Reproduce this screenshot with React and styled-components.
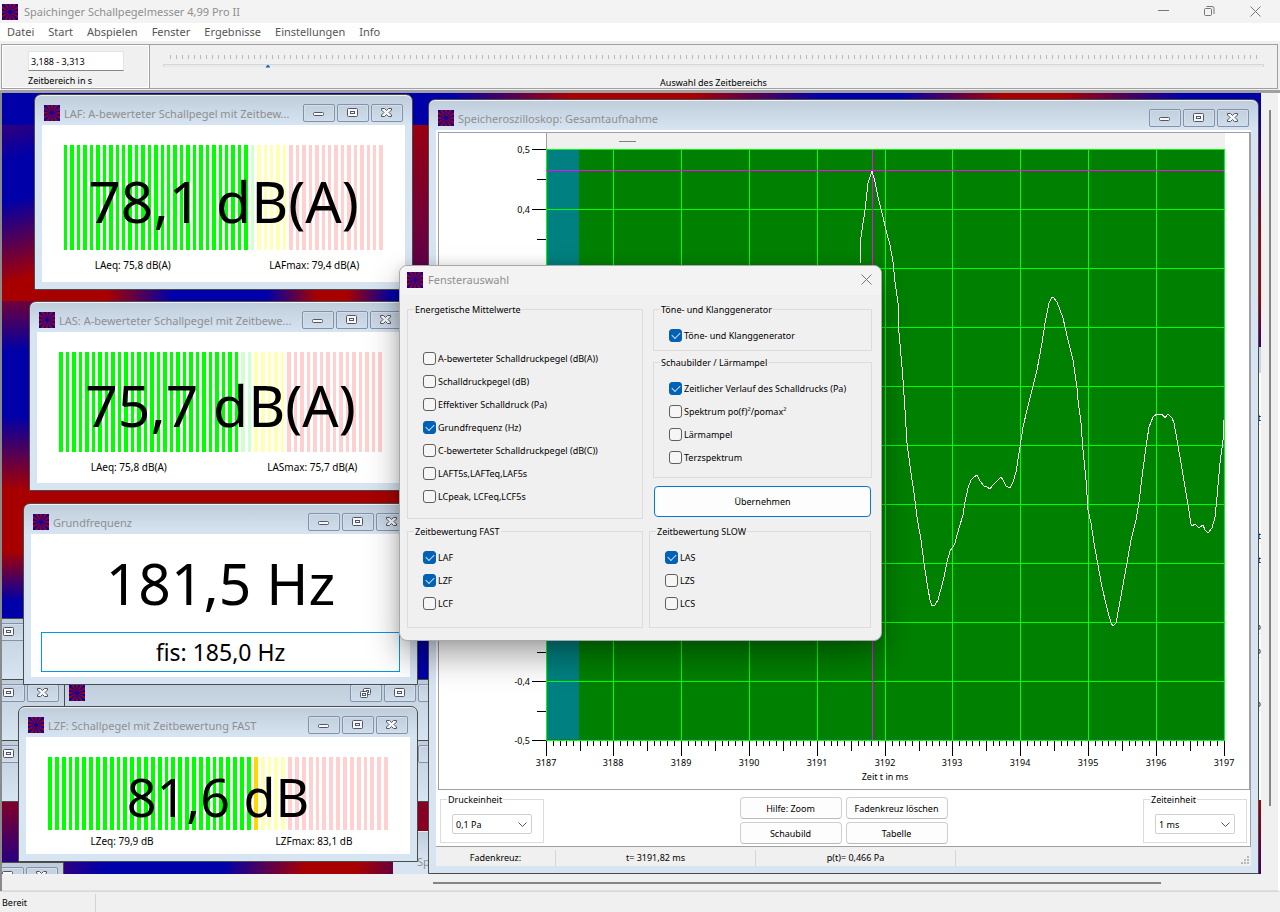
import React from 'react';
import styled, { createGlobalStyle, css } from 'styled-components';

const GlobalStyle = createGlobalStyle`
  * {
    box-sizing: border-box;
  }
  body {
    margin: 0;
    background: #f0f0f0;
    color: #000;
    font-family: 'Noto Sans', 'Open Sans', sans-serif;
    font-size: 9px;
    line-height: 13px;
  }
  button, input, select {
    font: inherit;
    color: inherit;
  }
`;

const menu = ['Datei', 'Start', 'Abspielen', 'Fenster', 'Ergebnisse', 'Einstellungen', 'Info'];

const wave = `860,264 861,237 865,210 868,183 872,171 875,182 878,197 882,213 886,230 890,245 893,262
  895,282 898,303 899,333 902,367 903,380 905,410 907,443 911,473 914,493 917,517 921,540 924,563
  927,583 930,600 932,606 935,605 938,600 942,585 944,577 947,562 950,551 953,547 955,543 959,528
  963,515 965,502 968,488 971,480 974,477 977,475 980,481 984,486 987,487 990,489 993,485 997,481
  1001,477 1003,480 1006,486 1010,488 1013,482 1016,472 1020,447 1023,427 1027,410 1031,394
  1037,370 1042,343 1045,323 1049,303 1052,297 1054,298 1057,302 1063,318 1068,340 1073,360
  1077,388 1078,400 1081,423 1083,450 1086,480 1088,510 1091,523 1094,543 1098,565 1102,587
  1107,608 1111,623 1113,626 1116,623 1119,607 1123,585 1127,563 1131,540 1136,520 1139,502
  1142,477 1146,447 1149,427 1153,417 1157,414 1162,414 1165,418 1168,414 1172,418 1174,423
  1177,440 1181,463 1185,487 1188,505 1191,524 1192,526 1195,524 1199,528 1203,525 1205,530
  1208,533 1212,528 1215,517 1217,497 1220,463 1223,440 1224,420`;

const gridX = [546, 613, 681, 749, 817, 885, 952, 1020, 1088, 1156, 1224];
const gridY = [149, 209, 268, 327, 386, 445, 504, 563, 622, 681, 740];
const yLabels = { 149: '0,5', 209: '0,4', 681: '-0,4', 740: '-0,5' };

const rays = Array.from({ length: 12 }, (_, i) => {
  const point = (deg) => {
    const a = (deg * Math.PI) / 180;
    return `${(8 + 14 * Math.cos(a)).toFixed(2)},${(8 + 14 * Math.sin(a)).toFixed(2)}`;
  };
  return `8,8 ${point(i * 30 + 8)} ${point(i * 30 + 23)}`;
});

const AppIcon = () => (
  <Icon viewBox="0 0 16 16" aria-hidden="true">
    <rect width="16" height="16" fill="#a3000f" />
    {rays.map((points) => (
      <polygon key={points} points={points} fill="#0a00a8" />
    ))}
    <circle cx="8" cy="8" r="2" fill="#0a00a8" />
  </Icon>
);

const glyphs = {
  min: <rect x="1.5" y="4.5" width="10" height="3" rx="1" />,
  max: (
    <>
      <rect x="1.5" y="0.5" width="10" height="8" rx="1" />
      <rect x="4.5" y="3.5" width="4" height="2" />
    </>
  ),
  restore: (
    <>
      <rect x="4.5" y="0.5" width="7" height="6" rx="1" />
      <rect x="7.5" y="2.5" width="2" height="2" />
      <rect x="1.5" y="3.5" width="7" height="6" rx="1" />
      <rect x="3.5" y="5.5" width="3" height="2" />
    </>
  ),
  close: <path d="M1.500 0.500h3l2 2 2-2h3v1.500l-2.500 2.500 2.500 2.500v1.500h-3l-2-2-2 2h-3v-1.500l2.500-2.500-2.500-2.500z" />
};

const labels = {
  min: 'Minimieren',
  max: 'Maximieren',
  restore: 'Wiederherstellen',
  close: 'Schließen'
};

const Controls = ({ kinds = ['min', 'max', 'close'] }) => (
  <ControlGroup>
    {kinds.map((kind) => (
      <ControlButton key={kind} type="button" aria-label={labels[kind]}>
        <svg width="14" height="10" viewBox="0 0 14 10" fill="#f8f8f8" stroke="#50566a">
          {glyphs[kind]}
        </svg>
      </ControlButton>
    ))}
  </ControlGroup>
);

const ChildWindow = ({ title, x, y, width, children }) => (
  <Frame $x={x} $y={y} $width={width}>
    <FrameTitle>
      <AppIcon />
      <TitleText>{title}</TitleText>
      <Controls />
    </FrameTitle>
    <FrameBody>{children}</FrameBody>
  </Frame>
);

const barColor = (index, level) => {
  const lit = index < level;
  if (index < 30) return lit ? '#00ff00' : '#d0ffd0';
  if (index < 35) return lit ? '#ffd800' : '#ffffb4';
  return lit ? '#ff0000' : '#ffd0d0';
};

const Meter = ({ value, level, height, footer, left, right, compact }) => (
  <>
    <MeterArea $height={height}>
      <Bars>
        {Array.from({ length: 50 }, (_, i) => (
          <Bar key={i} $color={barColor(i, level)} />
        ))}
      </Bars>
      <Reading $compact={compact}>{value}</Reading>
    </MeterArea>
    <Stats $height={footer}>
      <span>{left}</span>
      <span>{right}</span>
    </Stats>
  </>
);

const Chart = () => (
  <Plot viewBox="439 133 810 656" shapeRendering="crispEdges">
    <rect x="546" y="133" width="679" height="16" fill="#f0f0f0" />
    <path d="M546.500 133v16" stroke="#a0a0a0" />
    <path d="M619 141.500h17" stroke="#808080" />
    <rect x="546" y="149" width="679" height="592" fill="#008000" />
    <rect x="547" y="150" width="32" height="590" fill="#008080" />
    <path d="M1223.500 150v590M547 739.500h677" stroke="#008040" />
    {gridX.map((x) => (
      <path key={x} d={`M${x + 0.5} 149v592`} stroke="#00ff00" />
    ))}
    {gridY.map((y) => (
      <path key={y} d={`M546 ${y + 0.5}h679`} stroke="#00ff00" />
    ))}
    <path d="M546 170.500h678M872.500 150v590" stroke="#ff00ff" />
    <polyline points={wave} fill="none" stroke="#fff" />
    {gridY.map((y, i) => (
      <g key={y}>
        <path d={`M532 ${y + 0.5}h14`} stroke="#000" />
        {i < 10 && <path d={`M537 ${y + 30.5}h9`} stroke="#000" />}
        {yLabels[y] && (
          <AxisText x="530" y={y + 4} textAnchor="end">
            {yLabels[y]}
          </AxisText>
        )}
      </g>
    ))}
    {gridX.map((x, i) => (
      <g key={x}>
        <path d={`M${x + 0.5} 741v15`} stroke="#000" />
        {i < 10 &&
          [1, 2, 3, 4, 5, 6, 7, 8, 9].map((n) => (
            <path
              key={n}
              d={`M${Math.round(x + n * 6.78) + 0.5} 741v${n === 5 ? 10 : 5}`}
              stroke="#000"
            />
          ))}
        <AxisText x={x} y="766" textAnchor="middle">
          {3187 + i}
        </AxisText>
      </g>
    ))}
    <AxisText x="885" y="780" textAnchor="middle">
      Zeit t in ms
    </AxisText>
  </Plot>
);

const Check = ({ label, checked }) => (
  <CheckRow>
    <CheckInput type="checkbox" defaultChecked={checked} />
    {label}
  </CheckRow>
);

const Group = ({ title, items, width, top = 8, bottom = 8 }) => (
  <GroupBox $width={width} $top={top} $bottom={bottom}>
    <legend>{title}</legend>
    {items.map(([label, checked]) => (
      <Check key={label} label={label} checked={checked} />
    ))}
  </GroupBox>
);

const Unit = ({ title, value }) => (
  <UnitBox>
    <legend>{title}</legend>
    <SelectWrap>
      <Select aria-label={title} defaultValue={value}>
        <option>{value}</option>
      </Select>
      <svg width="9" height="5" viewBox="0 0 9 5" fill="none" stroke="#555">
        <path d="M0.500 0.500l4 4 4-4" />
      </svg>
    </SelectWrap>
  </UnitBox>
);

const SelectionDialog = () => (
  <Dialog role="dialog" aria-label="Fensterauswahl">
    <DialogTitle>
      <AppIcon />
      <TitleText>Fensterauswahl</TitleText>
      <DialogClose type="button" aria-label="Schließen">
        <svg width="11" height="11" viewBox="0 0 11 11" stroke="#777" fill="none">
          <path d="M0.500 0.500l10 10M10.500 0.500l-10 10" />
        </svg>
      </DialogClose>
    </DialogTitle>
    <DialogBody>
      <DialogRow $gap={10}>
        <Group
          title="Energetische Mittelwerte"
          width={236}
          top={31}
          bottom={10}
          items={[
            ['A-bewerteter Schalldruckpegel (dB(A))'],
            ['Schalldruckpegel (dB)'],
            ['Effektiver Schalldruck (Pa)'],
            ['Grundfrequenz (Hz)', true],
            ['C-bewerteter Schalldruckpegel (dB(C))'],
            ['LAFT5s,LAFTeq,LAF5s'],
            ['LCpeak, LCFeq,LCF5s']
          ]}
        />
        <DialogColumn>
          <Group
            title="Töne- und Klanggenerator"
            width={219}
            bottom={3}
            items={[['Töne- und Klanggenerator', true]]}
          />
          <Group
            title="Schaubilder / Lärmampel"
            width={219}
            items={[
              ['Zeitlicher Verlauf des Schalldrucks (Pa)', true],
              ['Spektrum po(f)²/pomax²'],
              ['Lärmampel'],
              ['Terzspektrum']
            ]}
          />
          <ApplyButton type="button">Übernehmen</ApplyButton>
        </DialogColumn>
      </DialogRow>
      <DialogRow $gap={6}>
        <Group
          title="Zeitbewertung FAST"
          width={236}
          bottom={12}
          items={[['LAF', true], ['LZF', true], ['LCF']]}
        />
        <Group
          title="Zeitbewertung SLOW"
          width={222}
          bottom={12}
          items={[['LAS', true], ['LZS'], ['LCS']]}
        />
      </DialogRow>
    </DialogBody>
  </Dialog>
);

const App = () => (
  <Page>
    <GlobalStyle />
    <TitleBar>
      <AppIcon />
      <TitleText>Spaichinger Schallpegelmesser 4,99 Pro II</TitleText>
      <SystemButton type="button" aria-label="Minimieren">
        <svg width="11" height="11" viewBox="0 0 11 11" stroke="#777" fill="none">
          <path d="M0 4.500h11" />
        </svg>
      </SystemButton>
      <SystemButton type="button" aria-label="Verkleinern">
        <svg width="11" height="11" viewBox="0 0 11 11" stroke="#777" fill="none">
          <rect x="0.500" y="2.500" width="7" height="7" rx="1" />
          <path d="M2.500 0.500h5.500a2 2 0 0 1 2 2v5.500" />
        </svg>
      </SystemButton>
      <SystemButton type="button" aria-label="Schließen">
        <svg width="11" height="11" viewBox="0 0 11 11" stroke="#777" fill="none">
          <path d="M0.500 0.500l10 10M10.500 0.500l-10 10" />
        </svg>
      </SystemButton>
    </TitleBar>
    <MenuBar>
      {menu.map((item) => (
        <MenuItem key={item} type="button">
          {item}
        </MenuItem>
      ))}
    </MenuBar>
    <Toolbar>
      <RangePanel>
        <RangeInput id="range" defaultValue="3,188 - 3,313" />
        <label htmlFor="range">Zeitbereich in s</label>
      </RangePanel>
      <SliderPanel>
        <Ticks />
        <Slider id="slider" type="range" min="0" max="1100" defaultValue="102" />
        <SliderLabel htmlFor="slider">Auswahl des Zeitbereichs</SliderLabel>
      </SliderPanel>
    </Toolbar>
    <Workspace>
      <Desktop>
        <MiniWindow $x={-98} $y={525} $width={161}>
          <Controls />
        </MiniWindow>
        <MiniWindow $x={-98} $y={586} $width={161}>
          <Controls />
        </MiniWindow>
        <MiniWindow $x={62} $y={586} $width={392}>
          <AppIcon />
          <Controls kinds={['restore', 'max', 'close']} />
        </MiniWindow>
        <MiniWindow $x={-98} $y={647} $width={161}>
          <Controls />
        </MiniWindow>
        <MiniWindow $x={62} $y={647} $width={392}>
          <Controls />
        </MiniWindow>
        <MiniWindow $x={-98} $y={769} $width={160}>
          <Controls />
        </MiniWindow>
        <BackWindow $x={391} $y={738} $width={300}>
          <TitleText>Sp</TitleText>
        </BackWindow>
        <SideWindow>
          <SideRow $height={36}>t</SideRow>
          <SideRow $height={118}>t</SideRow>
          <SideRow $height={24}>t</SideRow>
          <SideRow $height={67}>o</SideRow>
          <SideRow $height={24}>o</SideRow>
          <SideRow $height={53}>o</SideRow>
        </SideWindow>
        <ChildWindow
          title="LAF: A-bewerteter Schallpegel mit Zeitbew..."
          x={32}
          y={1}
          width={379}
        >
          <Meter
            value="78,1 dB(A)"
            level={29}
            height={105}
            footer={32}
            left="LAeq: 75,8 dB(A)"
            right="LAFmax: 79,4 dB(A)"
          />
        </ChildWindow>
        <ChildWindow
          title="LAS: A-bewerteter Schallpegel mit Zeitbewe..."
          x={27}
          y={208}
          width={383}
        >
          <Meter
            value="75,7 dB(A)"
            level={28}
            height={100}
            footer={31}
            left="LAeq: 75,8 dB(A)"
            right="LASmax: 75,7 dB(A)"
          />
        </ChildWindow>
        <ChildWindow title="Grundfrequenz" x={21} y={410} width={395}>
          <Frequency>
            <Reading>181,5 Hz</Reading>
            <Tone>fis: 185,0 Hz</Tone>
          </Frequency>
        </ChildWindow>
        <ChildWindow title="LZF: Schallpegel mit Zeitbewertung FAST" x={16} y={613} width={400}>
          <Meter
            value="81,6 dB"
            level={31}
            height={73}
            footer={24}
            left="LZeq: 79,9 dB"
            right="LZFmax: 83,1 dB"
            compact
          />
        </ChildWindow>
        <ChildWindow title="Speicheroszilloskop: Gesamtaufnahme" x={426} y={6} width={831}>
          <ChartPanel>
            <Chart />
          </ChartPanel>
          <ChartTools>
            <Unit title="Druckeinheit" value="0,1 Pa" />
            <ButtonGrid>
              <ToolButton type="button">Hilfe: Zoom</ToolButton>
              <ToolButton type="button">Fadenkreuz löschen</ToolButton>
              <ToolButton type="button">Schaubild</ToolButton>
              <ToolButton type="button">Tabelle</ToolButton>
            </ButtonGrid>
            <Unit title="Zeiteinheit" value="1 ms" />
          </ChartTools>
          <ChartStatus>
            <StatusCell $width={120}>Fadenkreuz:</StatusCell>
            <StatusCell $width={200}>t= 3191,82 ms</StatusCell>
            <StatusCell $width={200}>p(t)= 0,466 Pa</StatusCell>
            <Grip width="8" height="8" viewBox="0 0 8 8" fill="#b8b8b8">
              <path d="M6 0h2v2h-2zM3 3h2v2h-2zM6 3h2v2h-2zM0 6h2v2h-2zM3 6h2v2h-2zM6 6h2v2h-2z" />
            </Grip>
          </ChartStatus>
        </ChildWindow>
        <SelectionDialog />
      </Desktop>
      <VerticalScroll />
      <HorizontalScroll />
    </Workspace>
    <StatusBar>
      <Ready>Bereit</Ready>
    </StatusBar>
  </Page>
);

const Page = styled.div`
  display: flex;
  flex-direction: column;
  min-height: 100vh;
`;

const Icon = styled.svg`
  width: 16px;
  height: 16px;
  flex: none;
`;

const TitleText = styled.span`
  flex: 1;
  min-width: 0;
  white-space: nowrap;
  font-size: 11px;
  line-height: 18px;
  color: #8f8f8f;
`;

const TitleBar = styled.header`
  display: flex;
  align-items: center;
  gap: 6px;
  height: 23px;
  padding: 0 5px 0 2px;
  background: #f3f3f3;
`;

const bareButton = css`
  display: flex;
  align-items: center;
  justify-content: center;
  padding: 0;
  border: 0;
  background: none;
`;

const SystemButton = styled.button`
  ${bareButton}
  width: 40px;
  height: 22px;
`;

const MenuBar = styled.nav`
  display: flex;
  gap: 14px;
  height: 18px;
  padding: 0 7px;
  background: #fff;
`;

const MenuItem = styled.button`
  ${bareButton}
  font-size: 11px;
  line-height: 20px;
  color: #555;
`;

const Toolbar = styled.div`
  display: flex;
  height: 52px;
  padding: 3px 2px 1px 1px;
  border-bottom: 3px solid #a0a0a0;
`;

const RangePanel = styled.div`
  display: flex;
  flex-direction: column;
  gap: 3px;
  width: 149px;
  padding: 6px 26px 0;
  border: 1px solid #a0a0a0;
  box-shadow: inset 0 0 0 1px #fff;
`;

const RangeInput = styled.input`
  width: 96px;
  height: 20px;
  padding: 0 2px;
  border: 1px solid #e4e4e4;
  border-bottom-color: #868686;
  background: #fff;
`;

const SliderPanel = styled.div`
  display: flex;
  flex: 1;
  flex-direction: column;
  padding: 10px 13px 0;
  border: 1px solid #a0a0a0;
  border-left: 0;

  > * {
    flex: none;
  }
`;

const Ticks = styled.div`
  height: 4px;
  margin: 0 7px;
  background: repeating-linear-gradient(90deg, #b8b8b8 0 1px, transparent 1px 6px);
`;

const Slider = styled.input`
  appearance: none;
  width: 100%;
  height: 3px;
  margin: 5px 0 9px;
  border: 1px solid #d6d6d6;
  border-bottom: 0;
  background: #e7eaea;

  &::-webkit-slider-thumb {
    appearance: none;
    width: 5px;
    height: 3px;
    background: #0067c0;
    clip-path: polygon(50% 0, 100% 100%, 0 100%);
  }
`;

const SliderLabel = styled.label`
  text-align: center;
`;

const Workspace = styled.main`
  display: grid;
  flex: 1;
  grid-template-columns: minmax(0, 1fr) 17px;
  grid-template-rows: minmax(781px, 1fr) 17px;
  border-right: 2px solid #fff;
  border-left: 2px solid #8a8a8a;
`;

const Desktop = styled.div`
  position: relative;
  overflow: hidden;
  background:
    linear-gradient(180deg, #0000a8 20px, #a80000 150px, #a80000 200px, #3a0070 253px, #3a0070 706px, #a80000 707px, #3a0068) 100% 0 / 4px 100%,
    linear-gradient(90deg, #0000a8 450px, #a80000 570px, #a80000 690px, #0000a8 820px, #0000a8 900px, #a80000 1000px, #a80000 1060px, #0000a8 1180px) 0 0 / 100% 32px,
    linear-gradient(180deg, #980010, #500058) 411px 32px / 15px 180px,
    linear-gradient(165deg, #30007c, #0000a8 36px, #0000a8 75px, #a80000 155px) 0 32px / 32px 165px,
    linear-gradient(90deg, #a80000 105px, #0000a8 170px, #0000a8 265px, #a80000 315px, #a80000 345px, #0000a8 390px) 0 197px / 100% 11px,
    linear-gradient(100deg, #300080 60px, #0000a8 100px, #0000a8 220px, #a80000 300px, #a80000 350px, #500050 400px) 0 768px / 400px 13px,
    linear-gradient(180deg, #700038, #0000a8 50px, #0000a8 115px, #a80000 190px, #a80000 250px, #0000a8 300px, #0000a8 480px, #900018 490px, #200088 566px) 0 208px / 410px 100%,
    linear-gradient(180deg, #0000a8 700px, #880024 707px) 0 0 / 100% 100%;
  background-repeat: no-repeat;
`;

const Frame = styled.section`
  position: absolute;
  left: ${({ $x }) => $x}px;
  top: ${({ $y }) => $y}px;
  width: ${({ $width }) => $width}px;
  padding: 0 7px 7px;
  border: 1px solid #4b4b4b;
  border-radius: 7px 7px 0 0;
  background: linear-gradient(#bfcddb, #d7e4f2 30px);
  box-shadow: inset 0 1px #eef3f8;
`;

const FrameTitle = styled.div`
  display: flex;
  gap: 4px;
  height: 30px;
  padding: 10px 2px 0;
`;

const FrameBody = styled.div`
  background: #fff;
`;

const ControlGroup = styled.div`
  display: flex;
  gap: 2px;
  margin: -1px 0 0 auto;
`;

const ControlButton = styled.button`
  ${bareButton}
  width: 32px;
  height: 18px;
  border: 1px solid #8491ab;
  border-radius: 2px;
  background: linear-gradient(#c2cfdd, #cfdce9);
  box-shadow: inset 0 0 0 1px #d3deea;
`;

const MiniWindow = styled.div`
  display: flex;
  position: absolute;
  left: ${({ $x }) => $x}px;
  top: ${({ $y }) => $y}px;
  width: ${({ $width }) => $width}px;
  height: 62px;
  padding: 5px 5px 0 4px;
  border: 1px solid #4b4b4b;
  background: linear-gradient(#bfcddb, #d7e4f2);
`;

const BackWindow = styled(Frame)`
  display: flex;
  height: 60px;
  padding: 22px 0 0 24px;
  border: 0;
  border-radius: 0;
`;

const SideWindow = styled.div`
  position: absolute;
  top: 254px;
  right: 0;
  width: 100px;
  height: 453px;
  padding-top: 16px;
  border-top: 26px solid #c9d7e5;
  background: #fff;
`;

const SideRow = styled.div`
  display: flex;
  align-items: flex-end;
  justify-content: flex-end;
  height: ${({ $height }) => $height}px;
  border-bottom: 1px solid #e8e8e8;
`;

const MeterArea = styled.div`
  display: grid;
  height: ${({ $height }) => $height + 20}px;
  padding: 20px 22px 0;

  > * {
    grid-area: 1 / 1;
  }
`;

const Bars = styled.div`
  display: flex;
  gap: 3px;
`;

const Bar = styled.span`
  flex: 1;
  background: ${({ $color }) => $color};
`;

const Reading = styled.div`
  align-self: center;
  padding-top: 6px;
  font-size: ${({ $compact }) => ($compact ? 52 : 57)}px;
  line-height: 64px;
  text-align: center;
  white-space: nowrap;
`;

const Stats = styled.div`
  display: grid;
  grid-template-columns: 1fr 1fr;
  align-items: center;
  height: ${({ $height }) => $height}px;
  padding-bottom: 2px;
  font-size: 10px;
  line-height: 14px;
  text-align: center;
`;

const Frequency = styled.div`
  display: flex;
  flex-direction: column;
  gap: 17px;
  padding: 11px 10px 5px;

  > :first-child {
    align-self: stretch;
  }
`;

const Tone = styled.div`
  border: 1px solid #0099e5;
  font-size: 23px;
  line-height: 38px;
  text-align: center;
`;

const ChartPanel = styled.div`
  padding: 2px 0 0 2px;

  > svg {
    border: solid #a0a0a0;
    border-width: 1px 2px 1px 1px;
  }
`;

const Plot = styled.svg`
  display: block;
  width: 100%;
  background: #fff;
`;

const AxisText = styled.text`
  font-size: 9px;
`;

const ChartTools = styled.div`
  display: flex;
  align-items: center;
  justify-content: space-between;
  height: 57px;
  padding: 0 3px 0 4px;
  border-right: 1px solid #a0a0a0;
  border-bottom: 1px solid #a0a0a0;
`;

const fieldset = css`
  min-width: 0;
  margin: 0;
  border: 1px solid #dcdcdc;
`;

const UnitBox = styled.fieldset`
  ${fieldset}
  width: 104px;
  height: 50px;
  padding: 8px 11px;

  > legend {
    margin-left: -5px;
    padding: 0 1px;
  }
`;

const SelectWrap = styled.div`
  display: grid;
  align-items: center;

  > * {
    grid-area: 1 / 1;
  }
  > svg {
    justify-self: end;
    margin-right: 5px;
    pointer-events: none;
  }
`;

const Select = styled.select`
  appearance: none;
  width: 100%;
  height: 20px;
  padding: 0 3px;
  border: 1px solid #cfcfcf;
  border-radius: 2px;
  background: #fff;
`;

const ButtonGrid = styled.div`
  display: grid;
  grid-template-columns: 102px 102px;
  gap: 3px 4px;
  padding-top: 5px;
`;

const ToolButton = styled.button`
  height: 22px;
  padding: 0;
  border: 1px solid #cfcfcf;
  border-bottom-color: #b9b9b9;
  border-radius: 4px;
  background: #fdfdfd;
`;

const ChartStatus = styled.div`
  display: flex;
  align-items: center;
  height: 19px;
  padding-top: 2px;
  background: #f0f0f0;
`;

const StatusCell = styled.div`
  width: ${({ $width }) => $width}px;
  border-right: 1px solid #d4d4d4;
  line-height: 16px;
  text-align: center;
`;

const Grip = styled.svg`
  align-self: flex-end;
  margin: 0 2px 2px auto;
`;

const Dialog = styled.section`
  position: absolute;
  left: 397px;
  top: 172px;
  width: 483px;
  overflow: hidden;
  border: 1px solid #a8a8a8;
  border-radius: 8px;
  background: #f0f0f0;
  box-shadow: 0 16px 32px rgba(0, 0, 0, 0.34), 0 0 12px rgba(0, 0, 0, 0.12);
`;

const DialogTitle = styled.div`
  display: flex;
  align-items: center;
  gap: 5px;
  height: 29px;
  padding: 0 9px 2px 7px;
  background: #f3f3f3;
`;

const DialogClose = styled.button`
  ${bareButton}
  width: 12px;
  height: 20px;
`;

const DialogBody = styled.form`
  display: flex;
  flex-direction: column;
  gap: 6px;
  padding: 8px 8px 12px 7px;
`;

const DialogRow = styled.div`
  display: flex;
  gap: ${({ $gap }) => $gap}px;
`;

const DialogColumn = styled.div`
  display: flex;
  flex-direction: column;
  gap: 5px;
`;

const GroupBox = styled.fieldset`
  ${fieldset}
  width: ${({ $width }) => $width}px;
  padding: ${({ $top, $bottom }) => `${$top}px 0 ${$bottom}px 15px`};

  > legend {
    margin-left: -9px;
    padding: 0 1px;
  }
`;

const CheckRow = styled.label`
  display: flex;
  align-items: center;
  gap: 2px;
  height: 23px;
  white-space: nowrap;
`;

const CheckInput = styled.input`
  display: grid;
  place-items: center;
  appearance: none;
  width: 13px;
  height: 13px;
  margin: 0;
  border: 1px solid #5f5f5f;
  border-radius: 3px;
  background: #f6f6f6;

  &:checked {
    border-color: #0061b5;
    background: #0061b5;
  }
  &:checked::after {
    content: '';
    width: 7px;
    height: 4px;
    margin-top: -2px;
    border: solid #cfe3f5;
    border-width: 0 0 1px 1px;
    transform: rotate(-45deg);
  }
`;

const ApplyButton = styled.button`
  height: 31px;
  margin: 3px 1px 0;
  border: 1px solid #0078d4;
  border-radius: 4px;
  background: #fdfdfd;
`;

const VerticalScroll = styled.div`
  padding: 17px 7px 68px 8px;
  background: #f0f0f0;

  &::after {
    content: '';
    display: block;
    height: 100%;
    background: #868686;
  }
`;

const HorizontalScroll = styled.div`
  grid-column: 1 / -1;
  padding: 8px 117px 0 431px;
  border-bottom: 1px solid #dedede;

  &::after {
    content: '';
    display: block;
    height: 2px;
    background: #868686;
  }
`;

const StatusBar = styled.footer`
  display: flex;
  height: 21px;
  padding: 2px 0 0;
  border-top: 1px solid #dadada;
`;

const Ready = styled.div`
  width: 96px;
  padding-left: 2px;
  border-right: 1px solid #d4d4d4;
  line-height: 18px;
`;

export default App;
